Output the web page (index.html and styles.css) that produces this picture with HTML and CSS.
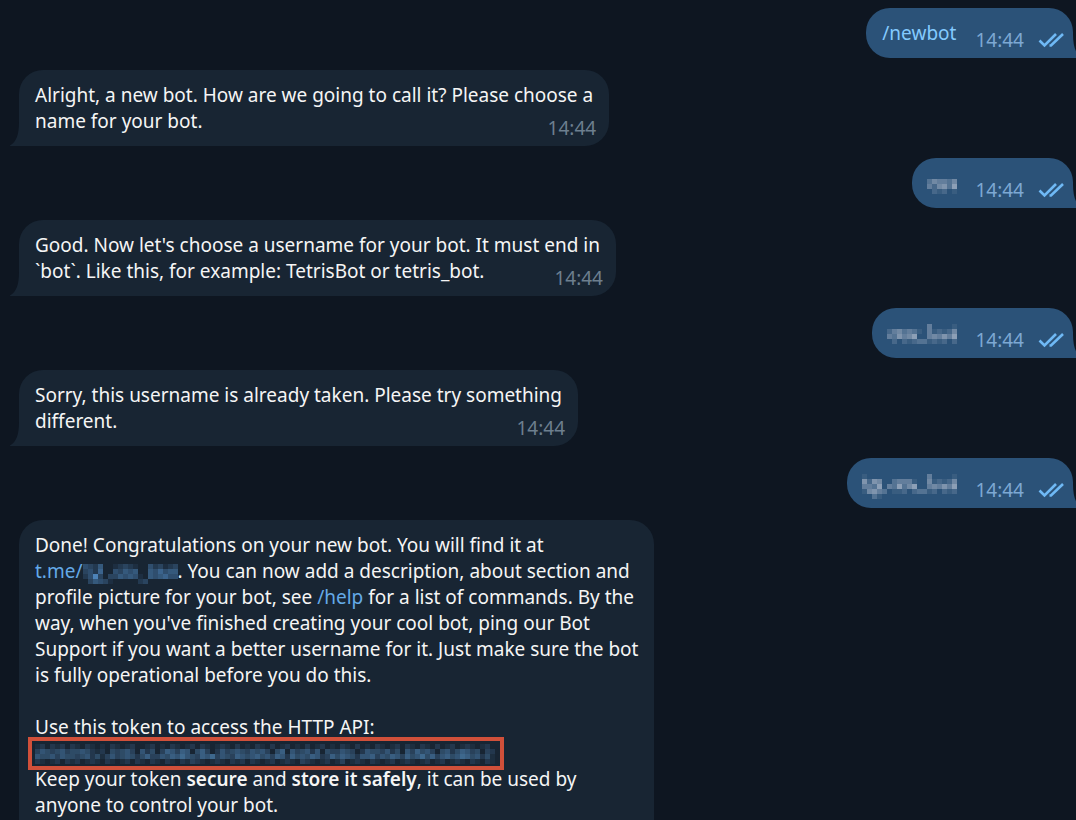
FILE: index.html
```
<!DOCTYPE html>
<html lang="en">
<head>
  <meta charset="UTF-8">
  <meta name="viewport" content="width=device-width, initial-scale=1.0">
  <title>BotFather</title>
  <link rel="stylesheet" href="styles.css">
</head>
<body>
  <svg class="defs" aria-hidden="true">
    <symbol id="ticks" viewBox="0 0 27 16">
      <path d="M1.5 8.5L6.5 13.5L18 2M11.5 13.5H13L25 2" />
    </symbol>
    <symbol id="tail" viewBox="0 0 10 24">
      <path d="M10 0V24H0.5C-0.2 24 0 23.3 0.6 23C6 20 9 13 9 0Z" />
    </symbol>
  </svg>
  <main class="chat">
    <div class="message out">
      <p><a href="#">/newbot</a></p>
      <time>14:44</time>
      <svg class="ticks"><use href="#ticks" /></svg>
      <svg class="tail"><use href="#tail" /></svg>
    </div>

    <div class="message in">
      <p>Alright, a new bot. How are we going to call it? Please choose a<br>name for your bot.</p>
      <time>14:44</time>
      <svg class="tail"><use href="#tail" /></svg>
    </div>

    <div class="message out">
      <span class="mosaic" data-rows="000000 354435 425637 021201 000000"></span>
      <time>14:44</time>
      <svg class="ticks"><use href="#ticks" /></svg>
      <svg class="tail"><use href="#tail" /></svg>
    </div>

    <div class="message in">
      <p>Good. Now let's choose a username for your bot. It must end in<br>`bot`. Like this, for example: TetrisBot or tetris_bot.</p>
      <time>14:44</time>
      <svg class="tail"><use href="#tail" /></svg>
    </div>

    <div class="message out">
      <span class="mosaic" data-rows="00000000400001 24534310412125 43645700454647 02021233121202 00000000000000"></span>
      <time>14:44</time>
      <svg class="ticks"><use href="#ticks" /></svg>
      <svg class="tail"><use href="#tail" /></svg>
    </div>

    <div class="message in">
      <p>Sorry, this username is already taken. Please try something<br>different.</p>
      <time>14:44</time>
      <svg class="tail"><use href="#tail" /></svg>
    </div>

    <div class="message out">
      <span class="mosaic" data-rows="1000000000000400001 6265003444100512125 4437043735700454647 1564301120233120212 0031000000000000000"></span>
      <time>14:44</time>
      <svg class="ticks"><use href="#ticks" /></svg>
      <svg class="tail"><use href="#tail" /></svg>
    </div>

    <div class="message in last">
      <p>Done! Congratulations on your new bot. You will find it at<br>
        <a href="#">t.me/<span class="mosaic" data-rows="4325001232100423123 3426004354500546455 2493033545410545644 0354310000023000000"></span></a>. You can now add a description, about section and<br>
        profile picture for your bot, see <a href="#">/help</a> for a list of commands. By the<br>
        way, when you've finished creating your cool bot, ping our Bot<br>
        Support if you want a better username for it. Just make sure the bot<br>
        is fully operational before you do this.</p>
      <p>Use this token to access the HTTP API:</p>
      <div class="token">
        <span class="mosaic" data-rows="12021202102101021012001201021012021012102010210201201020120102102010210120210210201201210120 35434534454212043453052403653650463025345435453046053452504335430254435240536453045246534032 54453544345241353454246335465754365735436545645365264546523646542556354653645746356457645241 21012021201210210120210210210213210121021202101201210321012013012102101201210120120121021021"></span>
      </div>
      <p>Keep your token <strong>secure</strong> and <strong>store it safely</strong>, it can be used by<br>anyone to control your bot.</p>
    </div>
  </main>
  <script src="script.js"></script>
</body>
</html>
```
FILE: styles.css
```
body {
  margin: 0;
  background-color: #0e1621;
  color: #f5f5f5;
  font-family: 'Noto Sans', 'Open Sans', sans-serif;
  font-size: 19px;
  line-height: 26px;
  overflow-x: hidden;
}

.defs {
  display: none;
}

.chat {
  display: flex;
  flex-direction: column;
  gap: 12px;
  height: 100vh;
  box-sizing: border-box;
  overflow: hidden;
  padding: 8px 3px 0 19px;
}

.message {
  position: relative;
  flex-shrink: 0;
  padding: 12px 16px;
  border-radius: 24px;
}

.message p {
  margin: 0;
}

a {
  color: #64aae8;
  text-decoration: none;
}

strong {
  font-weight: 600;
}

time {
  color: #6d7f8f;
}

/* the time shares the text's cell and sits in its lower right corner */
.in {
  display: grid;
  align-self: flex-start;
  background-color: #182533;
  border-bottom-left-radius: 0;
}

.in p,
.in time {
  grid-area: 1 / 1;
}

.in time {
  place-self: end;
  margin: 0 -3px -7px 0;
}

.in.last {
  display: block;
  padding-bottom: 40px;
}

.last p:nth-of-type(2) {
  margin-top: 26px;
}

.out {
  display: flex;
  align-items: center;
  align-self: flex-end;
  height: 26px;
  padding-right: 8px;
  background-color: #2b5278;
  border-bottom-right-radius: 0;
}

.out a {
  color: #83caff;
}

.out time {
  margin: 14px 14px 0 19px;
  color: #7da8d3;
}

.ticks {
  width: 27px;
  height: 16px;
  margin-top: 14px;
  fill: none;
  stroke: #6fb9f5;
  stroke-width: 2.6;
}

.tail {
  position: absolute;
  bottom: 0;
  width: 10px;
  height: 24px;
}

.in .tail {
  left: -9px;
  fill: #182533;
}

.out .tail {
  right: -9px;
  fill: #2b5278;
  transform: scaleX(-1);
}

.mosaic svg {
  display: block;
}

.out .mosaic {
  margin: 7px -1px 0;
  color: #a9b6c8;
}

a .mosaic {
  display: inline-block;
  height: 20px;
  vertical-align: -6px;
  line-height: 0;
  color: #4d83b8;
}

.token {
  display: flex;
  align-items: center;
  width: max-content;
  height: 25px;
  margin: 1px 0 0 -3px;
  padding: 0 5px 0 3px;
  outline: 4px solid #d0503a;
}

.token .mosaic {
  color: #4a7ba8;
}
```
FILE: script.js
```
const CELL = 5;

// Each digit is the strength of one cell, 0 is empty
document.querySelectorAll('.mosaic').forEach(el => {
  const rows = el.dataset.rows.split(' ');
  const width = rows[0].length * CELL;
  const height = rows.length * CELL;
  const cells = rows.map((row, y) => [...row].map((level, x) =>
    `<rect x="${x * CELL}" y="${y * CELL}" width="${CELL}" height="${CELL}" fill="currentColor" fill-opacity="${level / 9}" />`
  ).join('')).join('');
  el.innerHTML = `<svg width="${width}" height="${height}" shape-rendering="crispEdges">${cells}</svg>`;
});
```
